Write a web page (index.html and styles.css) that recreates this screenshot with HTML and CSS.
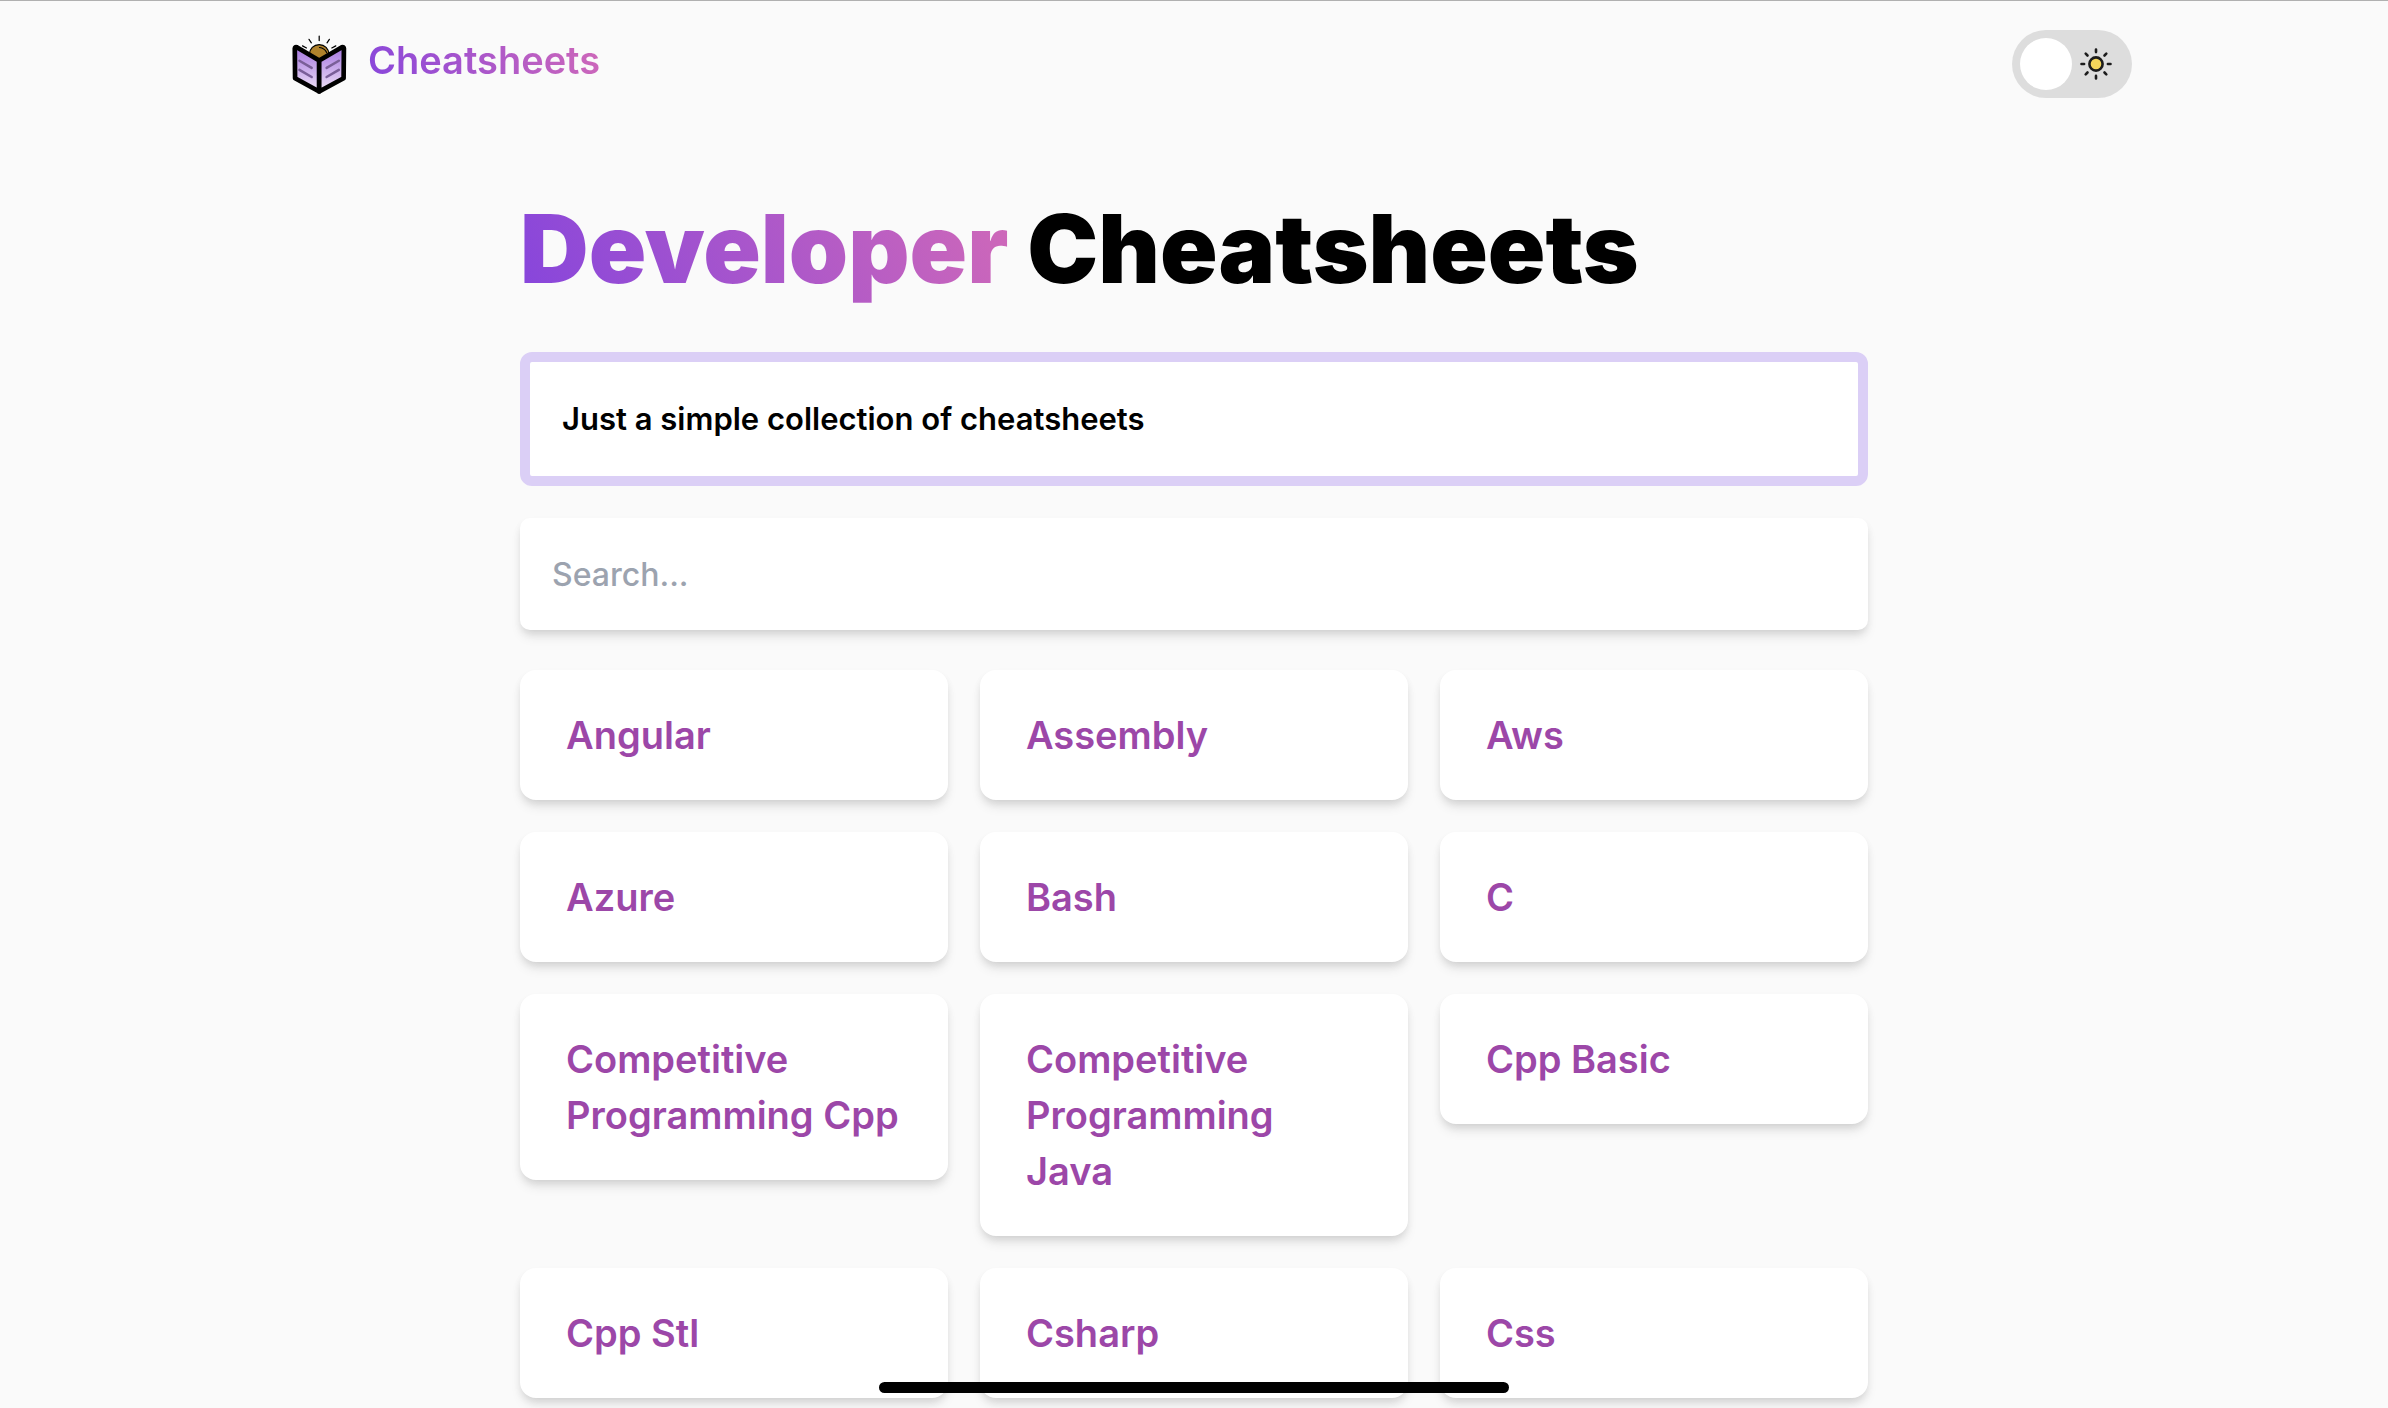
FILE: index.html
```html
<!DOCTYPE html>
<html lang="en">
<head>
<meta charset="utf-8">
<meta name="viewport" content="width=device-width, initial-scale=1">
<title>Cheatsheets</title>
<link rel="stylesheet" href="styles.css">
</head>
<body>
<header class="header">
  <a class="brand" href="#">
    <svg class="brand-logo" viewBox="0 0 54 58" aria-hidden="true">
      <defs>
        <linearGradient id="page" x1="0" y1="0" x2="0" y2="1">
          <stop offset="0" stop-color="#a576e0"/>
          <stop offset="1" stop-color="#efe2f6"/>
        </linearGradient>
      </defs>
      <g stroke="#000" stroke-width="1.2" stroke-linecap="round" fill="none">
        <path d="M26.7 1v4.500M16.700 4.300l2.300 3.400M36.700 4.300l-2.300 3.400M10.300 10.700l3.900 2M43 10.700l-3.900 2"/>
        <circle cx="26.700" cy="19" r="9.600" fill="#b0822c"/>
        <path d="M27 12.300q5 .5 7 5"/>
      </g>
      <g stroke="#000" stroke-width="4.600" stroke-linejoin="round" fill="url(#page)">
        <path d="M2.700 13.300q.2-2 2-1.300L26.700 25v30.500L3 42.500Z"/>
        <path d="M51 13.300q-.2-2-2-1.300L26.700 25v30.500L50.700 42.500Z"/>
      </g>
      <path d="M7.300 25.300l12 7M7.300 34.300l12 7M46 25.300l-12 7M46 34.300l-12 7" stroke="#7a5f98" stroke-width="2.500" stroke-linecap="round"/>
    </svg>
    <span class="brand-name gradient-text">Cheatsheets</span>
  </a>
  <label class="theme">
    <input class="theme-input" type="checkbox" role="switch" aria-label="Dark theme">
    <svg class="theme-sun" viewBox="0 0 32 32" aria-hidden="true">
      <circle cx="16" cy="16" r="6.600" fill="#f5d65b" stroke="#1c1c1c" stroke-width="2.600"/>
      <path d="M16 1.500v2.600M16 27.900v2.600M1.500 16h2.600M27.900 16h2.600M5.700 5.700l1.800 1.800M24.500 24.500l1.800 1.800M26.300 5.700l-1.800 1.800M7.500 24.500l-1.800 1.800" stroke="#1c1c1c" stroke-width="2.600" stroke-linecap="round"/>
    </svg>
  </label>
</header>
<main class="main">
  <h1 class="title"><span class="gradient-text">Developer</span> Cheatsheets</h1>
  <p class="intro">Just a simple collection of cheatsheets</p>
  <input class="search" type="search" placeholder="Search..." aria-label="Search">
  <nav class="sheets" aria-label="Cheatsheets">
    <a class="sheet" href="#">Angular</a>
    <a class="sheet" href="#">Assembly</a>
    <a class="sheet" href="#">Aws</a>
    <a class="sheet" href="#">Azure</a>
    <a class="sheet" href="#">Bash</a>
    <a class="sheet" href="#">C</a>
    <a class="sheet" href="#">Competitive Programming Cpp</a>
    <a class="sheet" href="#">Competitive Programming Java</a>
    <a class="sheet" href="#">Cpp Basic</a>
    <a class="sheet" href="#">Cpp Stl</a>
    <a class="sheet" href="#">Csharp</a>
    <a class="sheet" href="#">Css</a>
  </nav>
</main>
<div class="home-indicator"></div>
</body>
</html>
```
FILE: styles.css
```css
*, *::before { box-sizing: border-box; }
body {
  min-height: 100vh;
  margin: 0;
  border-top: 1px solid #b0b0b0;
  background: #fafafa;
  color: #000;
  font-family: Inter, "Liberation Sans", sans-serif;
}
a { text-decoration: none; }

.gradient-text {
  background: linear-gradient(65deg, #8645dc, #d069b8);
  -webkit-background-clip: text;
  background-clip: text;
  color: transparent;
}

.header {
  display: flex;
  justify-content: space-between;
  align-items: center;
  max-width: 1876px;
  margin: 0 auto;
  padding: 29px 0 29px 36px;
}
.brand { display: flex; align-items: center; gap: 21px; }
.brand-logo { width: 55px; height: 59px; }
.brand-name {
  padding-bottom: 8px;
  font-size: 38px;
  font-weight: 600;
  line-height: 56px;
}

.theme { position: relative; display: flex; }
.theme-input {
  appearance: none;
  width: 120px;
  height: 68px;
  margin: 0;
  padding: 8px;
  border-radius: 34px;
  background: #ddd;
}
.theme-input::before {
  content: "";
  display: block;
  width: 52px;
  height: 52px;
  border-radius: 50%;
  background: #fff;
}
.theme-sun { position: absolute; top: 18px; right: 20px; width: 32px; height: 32px; }

.main {
  display: flex;
  flex-direction: column;
  max-width: 1348px;
  margin: 0 auto;
}
.title {
  margin: 74px 0 55px;
  font-size: 95px;
  font-weight: 900;
  line-height: 96px;
}
.intro {
  margin: 0 0 32px;
  padding: 37px 32px;
  border: 10px solid #dbcff6;
  border-radius: 12px;
  background: #fff;
  font-size: 31px;
  font-weight: 600;
  line-height: 40px;
}
.search {
  appearance: none;
  width: 100%;
  height: 112px;
  margin: 0 0 40px;
  padding: 0 32px;
  border: 0;
  border-radius: 10px;
  background: #fff;
  box-shadow: 0 8px 12px -2px #0000001a, 0 4px 8px -2px #0000001a;
  font: 500 32px/48px Inter, "Liberation Sans", sans-serif;
}
.search::placeholder { color: #9ca3af; opacity: 1; }

.sheets {
  display: grid;
  grid-template-columns: repeat(3, 1fr);
  align-items: start;
  gap: 32px;
}
.sheet {
  padding: 37px 42px 37px 46px;
  border-radius: 16px;
  background: #fff;
  box-shadow: 0 8px 12px -2px #0000001a, 0 4px 8px -2px #0000001a;
  color: #9c47a8;
  font-size: 38px;
  font-weight: 600;
  line-height: 56px;
}

.home-indicator {
  position: fixed;
  bottom: 15px;
  left: 50%;
  width: 630px;
  height: 11px;
  margin-left: -315px;
  border-radius: 6px;
  background: #000;
}
```
